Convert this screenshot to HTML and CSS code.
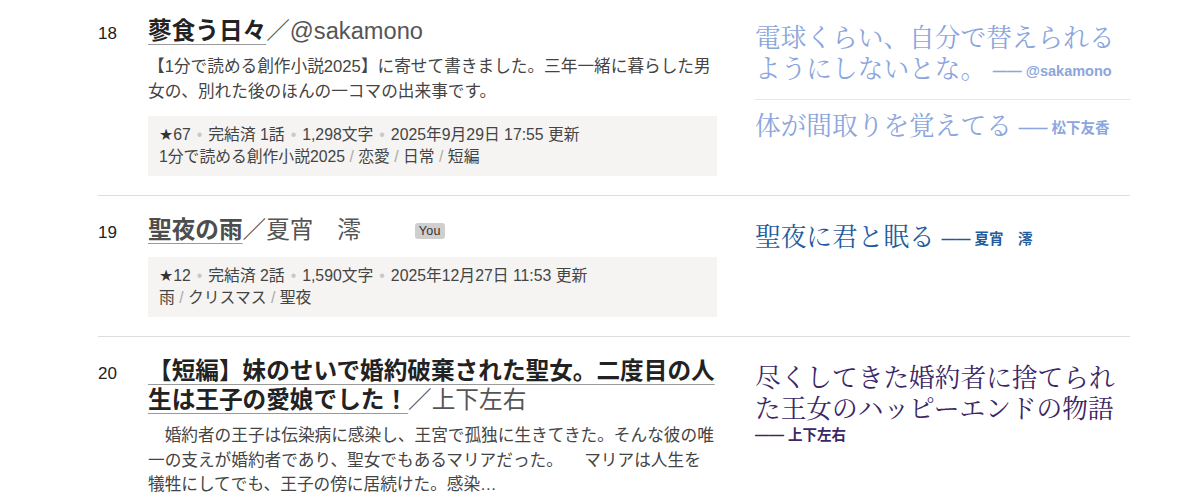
FILE: index.html
```html
<!DOCTYPE html>
<html lang="ja">
<head>
<meta charset="utf-8">
<title>ランキング</title>
<link rel="stylesheet" href="styles.css">
</head>
<body>
<div class="list">
  <div class="row">
    <div class="rank">18</div>
    <div class="main">
      <h2 class="title"><a class="name">蓼食う日々</a><span class="author">／@sakamono</span></h2>
      <p class="desc">【1分で読める創作小説2025】に寄せて書きました。三年一緒に暮らした男女の、別れた後のほんの一コマの出来事です。</p>
      <div class="meta">
        <div class="stats"><span class="star">★</span>67<span class="sep">•</span>完結済 1話<span class="sep">•</span>1,298文字<span class="sep">•</span>2025年9月29日 17:55 更新</div>
        <div class="tags">1分で読める創作小説2025<span class="slash"> / </span>恋愛<span class="slash"> / </span>日常<span class="slash"> / </span>短編</div>
      </div>
    </div>
    <div class="quotes">
      <div class="quote q-light">電球くらい、自分で替えられるようにしないとな。 <span class="by">—— @sakamono</span></div>
      <div class="quote q-light">体が間取りを覚えてる <span class="by">—— 松下友香</span></div>
    </div>
  </div>

  <div class="row">
    <div class="rank">19</div>
    <div class="main">
      <h2 class="title"><a class="name name-own">聖夜の雨</a><span class="author">／夏宵　澪</span><span class="badge">You</span></h2>
      <div class="meta">
        <div class="stats"><span class="star">★</span>12<span class="sep">•</span>完結済 2話<span class="sep">•</span>1,590文字<span class="sep">•</span>2025年12月27日 11:53 更新</div>
        <div class="tags">雨<span class="slash"> / </span>クリスマス<span class="slash"> / </span>聖夜</div>
      </div>
    </div>
    <div class="quotes">
      <div class="quote q-blue">聖夜に君と眠る <span class="by">—— 夏宵　澪</span></div>
    </div>
  </div>

  <div class="row">
    <div class="rank">20</div>
    <div class="main">
      <h2 class="title"><a class="name">【短編】妹のせいで婚約破棄された聖女。二度目の人生は王子の愛娘でした！</a><span class="author">／上下左右</span></h2>
      <p class="desc">　婚約者の王子は伝染病に感染し、王宮で孤独に生きてきた。そんな彼の唯一の支えが婚約者であり、聖女でもあるマリアだった。 　マリアは人生を犠牲にしてでも、王子の傍に居続けた。感染…</p>
    </div>
    <div class="quotes">
      <div class="quote q-purple">尽くしてきた婚約者に捨てられた王女のハッピーエンドの物語 <span class="by by-wrapped">—— 上下左右</span></div>
    </div>
  </div>
</div>
</body>
</html>
```

FILE: styles.css
```css
* { box-sizing: border-box; }

body {
  margin: 0;
  background: #fff;
  color: #333;
  font-family: "Liberation Sans", "Noto Sans CJK JP", sans-serif;
  text-spacing-trim: space-all;
}

.list {
  margin: -3px 0 0 98px;
  width: 1032px;
}

.row {
  display: flex;
  align-items: flex-start;
  padding: 15px 0 19px;
  border-bottom: 1px solid #dddddd;
}

.rank {
  flex: none;
  width: 50px;
  padding-top: 7px;
  font-size: 17px;
  line-height: 29px;
  color: #222;
}

.main {
  flex: none;
  width: 569px;
  padding-top: 5px;
}

.title {
  margin: 0;
  font-size: 23.65px;
  line-height: 29px;
  font-weight: normal;
}

.name {
  font-weight: bold;
  color: #222;
  text-decoration: underline 1px #9a9a9a;
  text-underline-offset: 5px;
}

.name-own { color: #4d4d4d; }

.author { color: #555; }

.badge {
  display: inline-block;
  margin-left: 54px;
  padding: 1px 4px;
  border-radius: 3px;
  background: #cfcfcf;
  color: #333;
  font-size: 12.5px;
  line-height: 14px;
  letter-spacing: 0.3px;
  vertical-align: 3px;
}

.desc {
  margin: 9px 0 0;
  font-size: 16.66px;
  line-height: 24.5px;
  color: #444;
}

.meta {
  margin-top: 12px;
  padding: 8px 11px;
  background: #f5f4f2;
  font-size: 15.8px;
  line-height: 22px;
  color: #444;
}

.star { font-family: "DejaVu Sans", sans-serif; color: #333; }

.sep { color: #c8c8c8; margin: 0 6px; }

.slash { color: #aaa; }

.quotes {
  flex: none;
  width: 375px;
  margin-left: auto;
}

.quote {
  padding: 8px 0 17px;
  font-family: "Noto Serif CJK JP", "Noto Sans CJK JP", serif;
  font-size: 25.7px;
  line-height: 31px;
}

.quote + .quote {
  border-top: 1px solid #e6e6e6;
  padding-top: 8px;
}

.q-light { color: #8ba6dd; }
.q-blue { color: #1f5c9e; }
.q-purple { color: #3b2666; }

.by {
  font-family: "Liberation Sans", "Noto Sans CJK JP", sans-serif;
  font-weight: bold;
  font-size: 14.5px;
  line-height: 1;
  white-space: nowrap;
  vertical-align: 2px;
}

.by-wrapped { vertical-align: 9px; }
```
